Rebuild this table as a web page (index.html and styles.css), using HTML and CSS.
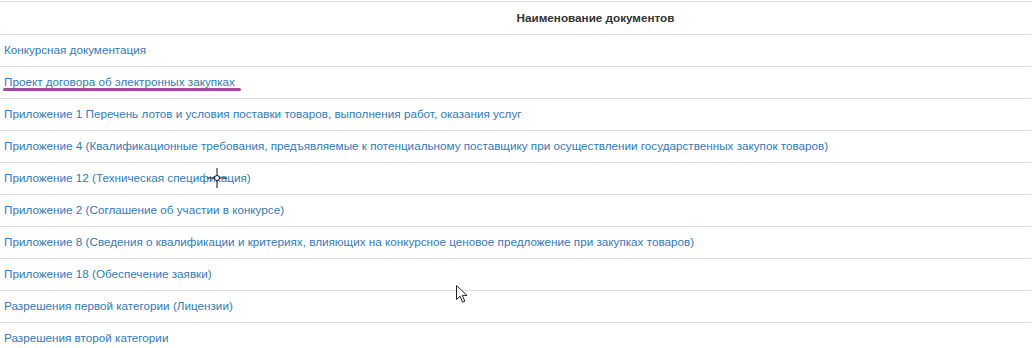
FILE: index.html
```html
<!DOCTYPE html>
<html lang="ru">
<head>
<meta charset="utf-8">
<link rel="stylesheet" href="styles.css">
</head>
<body>
<div class="wrap">
<table class="docs">
  <thead>
    <tr><th class="head">Наименование документов</th></tr>
  </thead>
  <tbody>
    <tr><td><a href="#">Конкурсная документация</a></td></tr>
    <tr><td><a href="#">Проект договора об электронных закупках</a></td></tr>
    <tr><td><a href="#">Приложение 1 Перечень лотов и условия поставки товаров, выполнения работ, оказания услуг</a></td></tr>
    <tr><td><a href="#">Приложение 4 (Квалификационные требования, предъявляемые к потенциальному поставщику при осуществлении государственных закупок товаров)</a></td></tr>
    <tr><td><a href="#">Приложение 12 (Техническая спецификация)</a></td></tr>
    <tr><td><a href="#">Приложение 2 (Соглашение об участии в конкурсе)</a></td></tr>
    <tr><td><a href="#">Приложение 8 (Сведения о квалификации и критериях, влияющих на конкурсное ценовое предложение при закупках товаров)</a></td></tr>
    <tr><td><a href="#">Приложение 18 (Обеспечение заявки)</a></td></tr>
    <tr><td><a href="#">Разрешения первой категории (Лицензии)</a></td></tr>
    <tr><td><a href="#">Разрешения второй категории</a></td></tr>
  </tbody>
</table>
<div class="marker"></div>
<svg class="crosshair" width="22" height="22" viewBox="0 0 22 22">
  <line x1="1" y1="11" x2="21" y2="11" stroke="#111" stroke-width="1"/>
  <line x1="11" y1="1" x2="11" y2="21" stroke="#111" stroke-width="1"/>
  <circle cx="11" cy="11" r="2.5" fill="#fff" stroke="#111" stroke-width="1"/>
</svg>
<svg class="pointer" width="14" height="20" viewBox="0 0 14 20">
  <path d="M0.5 0.5 L0.5 14.5 L4 11.2 L6.6 17.2 L8.8 16.2 L6.3 10.4 L11 10.4 Z" fill="#fff" stroke="#222" stroke-width="1" stroke-linejoin="round"/>
</svg>
</div>
</body>
</html>
```
FILE: styles.css
```css
html, body {
  margin: 0;
  padding: 0;
  background: #fff;
}
.wrap {
  position: relative;
  padding-top: 1px;
}
.docs {
  width: 1031px;
  border-collapse: collapse;
  font-family: "Liberation Sans", Arial, sans-serif;
  font-size: 11.7px;
}
.docs th,
.docs td {
  border-top: 1px solid #dddddd;
  padding: 0 4px 2px;
  vertical-align: middle;
  box-sizing: border-box;
}
.docs .head {
  text-align: center;
  padding-left: 164px;
  font-weight: bold;
  color: #333333;
  height: 33px;
}
.docs td {
  text-align: left;
  height: 32px;
}
.docs a {
  color: #337ab7;
  text-decoration: none;
}
.marker {
  position: absolute;
  left: 3px;
  top: 88px;
  width: 238px;
  height: 3px;
  border-radius: 2px;
  background: #a04aa2;
}
.crosshair {
  position: absolute;
  left: 206px;
  top: 167px;
}
.pointer {
  position: absolute;
  left: 456px;
  top: 285px;
}
```
